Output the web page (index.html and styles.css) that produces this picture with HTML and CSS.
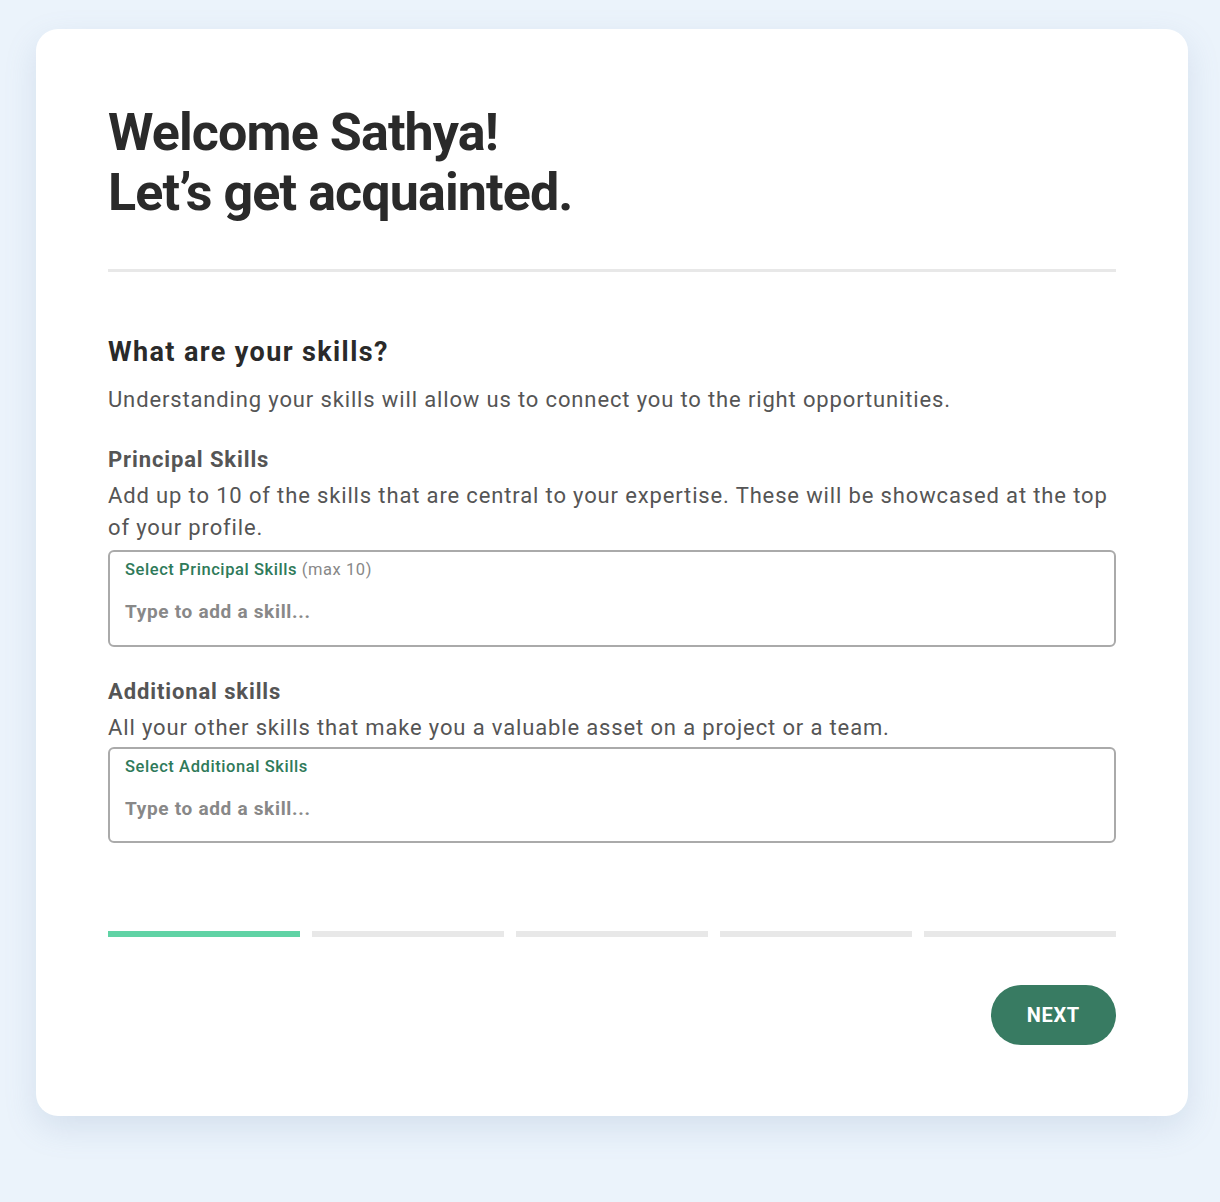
FILE: index.html
```html
<!DOCTYPE html>
<html lang="en">
<head>
<meta charset="utf-8">
<title>Welcome</title>
<link rel="stylesheet" href="styles.css">
</head>
<body>
<main class="card">
  <h1 class="title">Welcome Sathya!<br>Let’s get acquainted.</h1>
  <hr class="divider">
  <h2 class="question">What are your skills?</h2>
  <p class="intro">Understanding your skills will allow us to connect you to the right opportunities.</p>

  <h3 class="field-title">Principal Skills</h3>
  <p class="field-desc">Add up to 10 of the skills that are central to your expertise. These will be showcased at the top of your profile.</p>
  <div class="skill-box">
    <div class="skill-label">Select Principal Skills <span class="skill-hint">(max 10)</span></div>
    <div class="skill-placeholder">Type to add a skill...</div>
  </div>

  <h3 class="field-title field-title-second">Additional skills</h3>
  <p class="field-desc">All your other skills that make you a valuable asset on a project or a team.</p>
  <div class="skill-box skill-box-second">
    <div class="skill-label">Select Additional Skills</div>
    <div class="skill-placeholder">Type to add a skill...</div>
  </div>

  <div class="progress">
    <span class="step step-active"></span>
    <span class="step"></span>
    <span class="step"></span>
    <span class="step"></span>
    <span class="step"></span>
  </div>

  <div class="actions">
    <button class="next-btn" type="button">NEXT</button>
  </div>
</main>
</body>
</html>
```

FILE: styles.css
```css
html, body {
  margin: 0;
  padding: 0;
}
body {
  background: #ebf3fb;
  font-family: Roboto, "Liberation Sans", Arial, sans-serif;
  letter-spacing: 0.036em;
  min-height: 1202px;
  padding: 29px 32px 86px 36px;
  box-sizing: border-box;
}
.card {
  background: #ffffff;
  border-radius: 22px;
  box-shadow: 0 12px 32px rgba(110, 140, 175, 0.18);
  padding: 74px 72px 71px;
  display: flex;
  flex-direction: column;
}
.title {
  margin: 0;
  font-size: 52px;
  line-height: 60px;
  font-weight: 700;
  color: #2a2a2a;
  letter-spacing: -0.9px;
}
.divider {
  margin: 46px 0 0;
  border: 0;
  height: 3px;
  background: #e8e8e8;
}
.question {
  margin: 64px 0 0;
  font-size: 27px;
  line-height: 32px;
  font-weight: 700;
  color: #2a2a2a;
  letter-spacing: 0.051em;
}
.intro {
  margin: 16px 0 0;
  font-size: 22px;
  line-height: 32px;
  color: #555555;
  letter-spacing: 0.039em;
}
.field-title {
  margin: 28px 0 0;
  font-size: 22px;
  line-height: 32px;
  font-weight: 700;
  color: #555555;
  letter-spacing: 0.04em;
}
.field-title-second {
  margin-top: 29px;
}
.field-desc {
  margin: 4px 0 0;
  font-size: 22px;
  line-height: 32px;
  color: #555555;
  letter-spacing: 0.039em;
}
.skill-box {
  margin-top: 6px;
  border: 2px solid #aaaaaa;
  border-radius: 6px;
  padding: 8px 15px 21px;
}
.skill-box-second {
  margin-top: 3px;
  padding-bottom: 20px;
}
.skill-label {
  font-size: 16.5px;
  line-height: 20px;
  font-weight: 500;
  color: #2f7a5a;
}
.skill-hint {
  font-weight: 400;
  color: #888888;
}
.skill-placeholder {
  margin-top: 20px;
  font-size: 19px;
  line-height: 24px;
  font-weight: 700;
  color: #888888;
  letter-spacing: 0.036em;
}
.progress {
  margin-top: 88px;
  display: flex;
  gap: 12px;
}
.step {
  flex: 1;
  height: 6px;
  background: #e8e8e8;
}
.step-active {
  background: #60d3a5;
}
.actions {
  margin-top: 48px;
  display: flex;
  justify-content: flex-end;
}
.next-btn {
  height: 60px;
  padding: 0 36px;
  border: 0;
  border-radius: 30px;
  background: #387b62;
  color: #ffffff;
  font-family: Roboto, "Liberation Sans", Arial, sans-serif;
  letter-spacing: 0.036em;
  font-size: 20px;
  font-weight: 700;
  cursor: pointer;
}
```
